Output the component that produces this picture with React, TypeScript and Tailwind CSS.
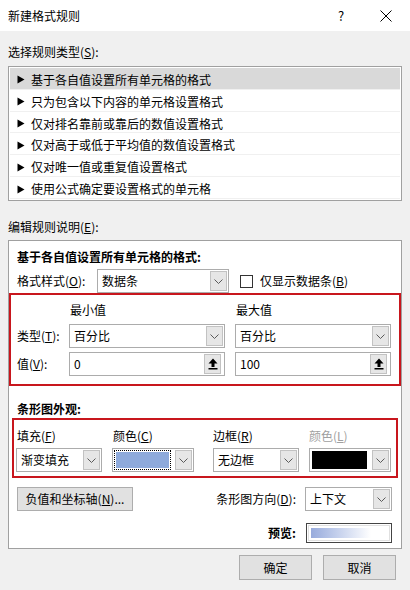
import React from "react";

function Chevron() {
  return (
    <svg width="9" height="5" viewBox="0 0 9 5">
      <path d="M0.5 0.5 L4.5 4.5 L8.5 0.5" fill="none" stroke="#5a5a5a" strokeWidth="1" />
    </svg>
  );
}

function UpArrow() {
  return (
    <svg width="10" height="12" viewBox="0 0 10 12">
      <path d="M5 0.5 L9.5 5.5 L6.5 5.5 L6.5 9 L3.5 9 L3.5 5.5 L0.5 5.5 Z" fill="#000" />
      <rect x="0.5" y="10" width="9" height="1.5" fill="#000" />
    </svg>
  );
}

function DropBtn() {
  return (
    <div className="m-[1px] w-[17px] shrink-0 border border-[#c2c2c2] bg-[#e6e6e6] flex items-center justify-center">
      <Chevron />
    </div>
  );
}

function Combo({ cls, text }: { cls: string; text: string }) {
  return (
    <div className={"flex border border-[#acacac] bg-white " + cls}>
      <div className="flex-1 flex items-center pl-[4px] text-[12px] leading-[16px] text-black">{text}</div>
      <DropBtn />
    </div>
  );
}

function ValueInput({ text }: { text: string }) {
  return (
    <div className="flex w-[156px] h-[24px] border border-[#acacac] bg-white">
      <div className="flex-1 flex items-center pl-[4px]">{text}</div>
      <div className="my-[1px] mr-[3px] w-[17px] shrink-0 border border-[#c2c2c2] bg-[#e6e6e6] flex items-center justify-center">
        <UpArrow />
      </div>
    </div>
  );
}

function Tri() {
  return (
    <svg width="8" height="9" viewBox="0 0 8 9" className="shrink-0">
      <path d="M0.5 0.5 L7.5 4.5 L0.5 8.5 Z" fill="#000" />
    </svg>
  );
}

const items = [
  "基于各自值设置所有单元格的格式",
  "只为包含以下内容的单元格设置格式",
  "仅对排名靠前或靠后的数值设置格式",
  "仅对高于或低于平均值的数值设置格式",
  "仅对唯一值或重复值设置格式",
  "使用公式确定要设置格式的单元格",
];

export default function App() {
  return (
    <div className="w-[410px] h-[590px] bg-[#f0f0f0] flex flex-col font-['Noto_Sans_CJK_SC',sans-serif] text-[12px] leading-[16px] text-black overflow-hidden">
      {/* Title bar */}
      <div className="h-[31px] bg-white flex items-center pl-[8px] shrink-0">
        <div className="flex-1 text-[12px]">新建格式规则</div>
        <div className="w-[12px] text-center text-[13px] mr-[33px]">?</div>
        <svg width="12" height="12" viewBox="0 0 12 12" className="mr-[18px]">
          <path d="M0.5 0.5 L11.5 11.5 M11.5 0.5 L0.5 11.5" stroke="#000" strokeWidth="1" />
        </svg>
      </div>

      <div className="flex flex-col px-[8px]">
        <div className="mt-[13px] h-[16px]">
          选择规则类型(<u>S</u>):
        </div>
        <div className="mt-[6px] w-[394px] h-[135px] border border-[#a0a0a0] bg-white p-[1px] flex flex-col">
          {items.map((t, i) => (
            <div
              key={i}
              className={
                "h-[22px] flex items-center pl-[7px] pt-[3px] gap-[6px] border-b border-[#f0f0f0] " +
                (i === 0 ? "bg-[#d9d9d9]" : "")
              }
            >
              <Tri />
              <span>{t}</span>
            </div>
          ))}
        </div>

        <div className="mt-[18px] h-[16px]">
          编辑规则说明(<u>E</u>):
        </div>

        <div className="mt-[5px] w-[394px] h-[309px] border border-[#a0a0a0] bg-white flex flex-col">
          <div className="mt-[8px] ml-[8px] h-[16px] font-bold">基于各自值设置所有单元格的格式:</div>
          <div className="mt-[4px] flex items-center h-[24px]">
            <div className="ml-[8px] w-[80px]">
              格式样式(<u>O</u>):
            </div>
            <Combo cls="w-[132px] h-[24px]" text="数据条" />
            <div className="ml-[11px] w-[13px] h-[13px] border border-[#333333] bg-white" />
            <div className="ml-[7px]">
              仅显示数据条(<u>B</u>)
            </div>
          </div>

          {/* red box 1 */}
          <div className="w-[392px] h-[93px] border-2 border-[#c8161d] flex flex-col">
            <div className="mt-[7px] h-[16px] flex">
              <div className="ml-[59px] w-[166px]">最小值</div>
              <div>最大值</div>
            </div>
            <div className="mt-[6px] flex items-center">
              <div className="ml-[6px] w-[52px]">
                类型(<u>T</u>):
              </div>
              <Combo cls="w-[156px] h-[24px]" text="百分比" />
              <div className="w-[10px]" />
              <Combo cls="w-[156px] h-[24px]" text="百分比" />
            </div>
            <div className="mt-[4px] flex items-center">
              <div className="ml-[6px] w-[52px]">
                值(<u>V</u>):
              </div>
              <ValueInput text="0" />
              <div className="w-[10px]" />
              <ValueInput text="100" />
            </div>
          </div>

          <div className="mt-[15px] ml-[8px] h-[16px] font-bold">条形图外观:</div>

          {/* red box 2 */}
          <div className="mt-[1px] ml-[3px] w-[386px] h-[60px] border-2 border-[#c8161d] flex flex-col">
            <div className="mt-[8px] h-[16px] flex">
              <div className="ml-[3px] w-[96px]">
                填充(<u>F</u>)
              </div>
              <div className="w-[100px]">
                颜色(<u>C</u>)
              </div>
              <div className="w-[96px]">
                边框(<u>R</u>)
              </div>
              <div className="text-[#a0a0a0]">
                颜色(<u>L</u>)
              </div>
            </div>
            <div className="mt-[4px] flex">
              <Combo cls="ml-[2px] w-[86px] h-[24px]" text="渐变填充" />
              <div className="ml-[10px] w-[82px] h-[24px] flex border border-[#acacac] bg-white">
                <div className="flex-1 m-[1px] mr-[3px] border border-dotted border-black p-[1px]">
                  <div className="w-full h-full bg-[#8eaadb]" />
                </div>
                <DropBtn />
              </div>
              <Combo cls="ml-[19px] w-[86px] h-[24px]" text="无边框" />
              <div className="ml-[10px] w-[82px] h-[24px] flex border border-[#acacac] bg-white">
                <div className="flex-1 m-[2px] mr-[4px] bg-black" />
                <DropBtn />
              </div>
            </div>
          </div>

          <div className="mt-[9px] flex items-center h-[24px]">
            <div className="ml-[8px] w-[116px] h-[24px] border border-[#adadad] bg-[#e1e1e1] flex items-center justify-center">
              负值和坐标轴(<u>N</u>)...
            </div>
            <div className="flex-1 text-right pr-[9px]">
              条形图方向(<u>D</u>):
            </div>
            <Combo cls="w-[87px] h-[24px] mr-[9px]" text="上下文" />
          </div>

          <div className="mt-[12px] flex items-center h-[20px]">
            <div className="flex-1 text-right pr-[10px] font-bold">预览:</div>
            <div className="w-[86px] h-[20px] border border-[#444444] bg-white p-[1px] mr-[9px]">
              <div className="w-full h-full border border-[#e0e0e0] p-[2px]">
                <div className="w-[60px] h-full bg-gradient-to-r from-[#98abdc] to-white" />
              </div>
            </div>
          </div>
        </div>

        <div className="mt-[6px] flex justify-end pr-[6px] gap-[11px]">
          <div className="w-[73px] h-[25px] border border-[#adadad] bg-[#e1e1e1] flex items-center justify-center">
            确定
          </div>
          <div className="w-[73px] h-[25px] border border-[#adadad] bg-[#e1e1e1] flex items-center justify-center">
            取消
          </div>
        </div>
      </div>
    </div>
  );
}
